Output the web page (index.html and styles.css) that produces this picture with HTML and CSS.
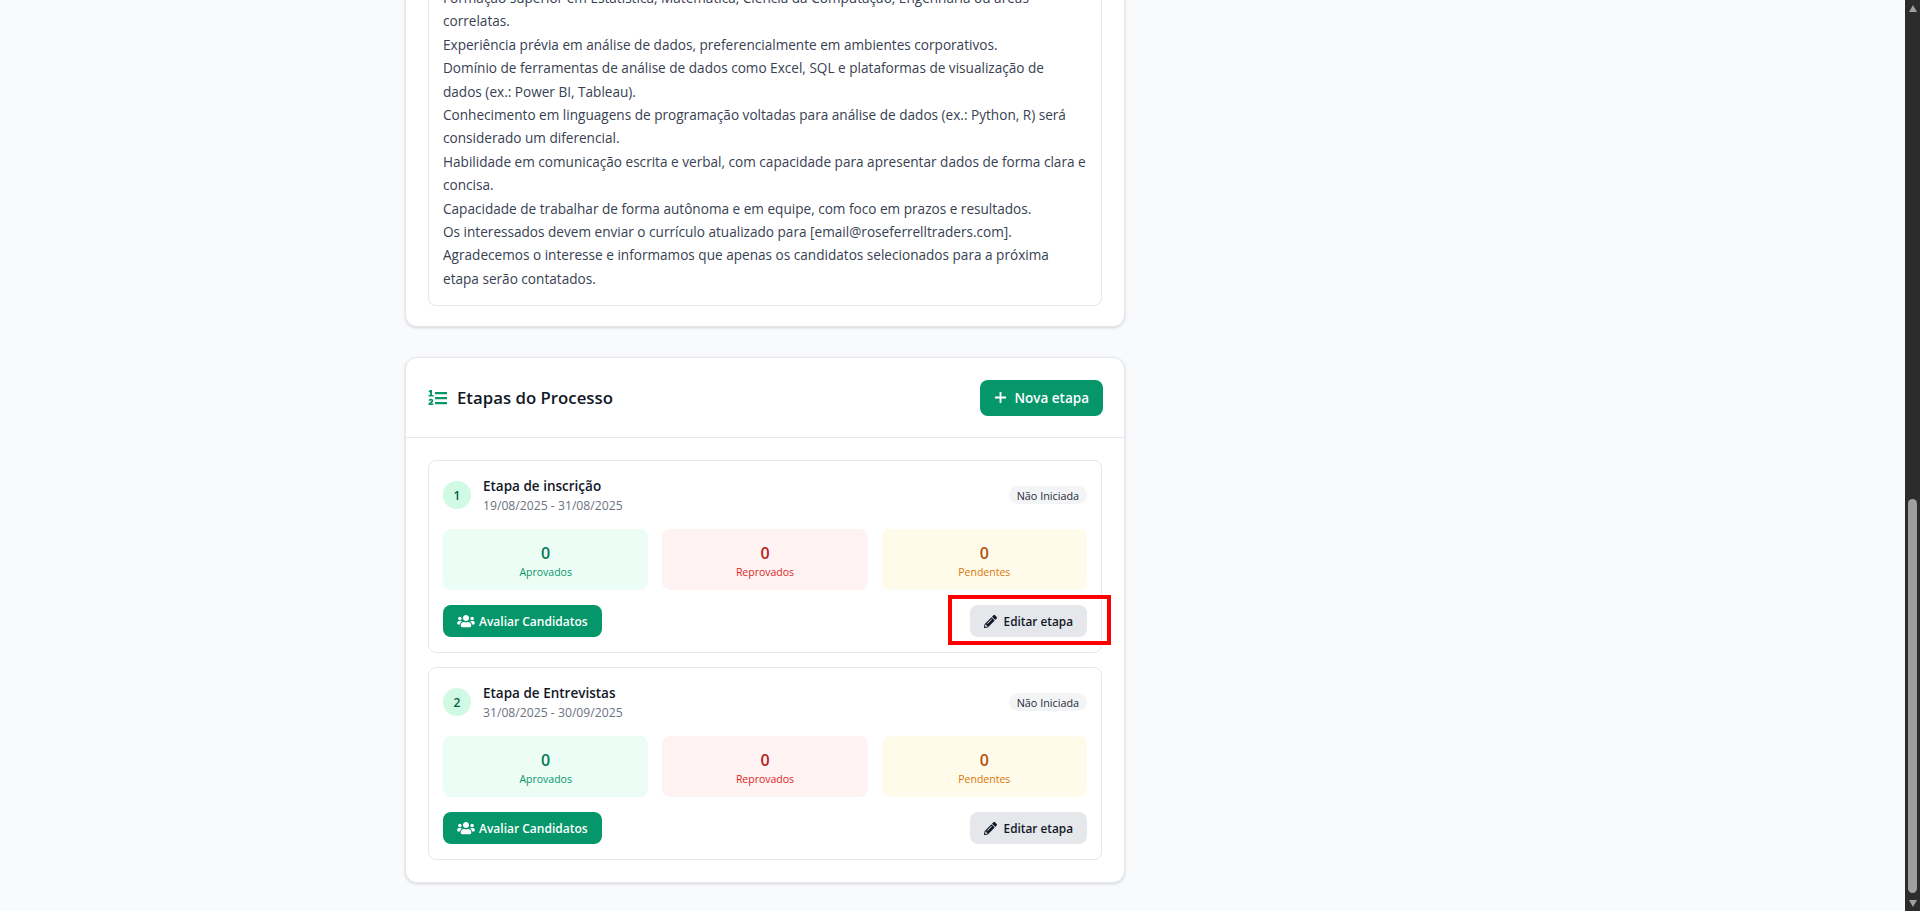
FILE: index.html
```html
<!DOCTYPE html>
<html lang="pt-BR">

<head>
  <meta charset="UTF-8">
  <meta name="viewport" content="width=device-width, initial-scale=1.0">
  <title>Etapas do Processo</title>
  <link rel="stylesheet" href="styles.css">
</head>

<body>
  <main class="page">
    <section class="card description-card">
      <div class="description">
        <p>Formação superior em Estatística, Matemática, Ciência da Computação, Engenharia ou áreas<br>correlatas.</p>
        <p>Experiência prévia em análise de dados, preferencialmente em ambientes corporativos.</p>
        <p>Domínio de ferramentas de análise de dados como Excel, SQL e plataformas de visualização de<br>dados (ex.: Power BI, Tableau).</p>
        <p>Conhecimento em linguagens de programação voltadas para análise de dados (ex.: Python, R) será<br>considerado um diferencial.</p>
        <p>Habilidade em comunicação escrita e verbal, com capacidade para apresentar dados de forma clara e<br>concisa.</p>
        <p>Capacidade de trabalhar de forma autônoma e em equipe, com foco em prazos e resultados.</p>
        <p>Os interessados devem enviar o currículo atualizado para [email@roseferrelltraders.com].</p>
        <p>Agradecemos o interesse e informamos que apenas os candidatos selecionados para a próxima<br>etapa serão contatados.</p>
      </div>
    </section>

    <section class="card steps-card">
      <header class="steps-header">
        <h2 class="steps-title">
          <svg class="icon-list" viewBox="0 0 19 16" fill="currentColor"><path d="M7 2h12v2.2H7zM7 7h12v2.2H7zM7 12h12v2.2H7z"/><path d="M2 0h2v5h1.6v1.5H.6V5h1.500V2L.7 2.600V1.200zM.5 10.500C.7 9.300 1.700 8.700 2.900 8.700c1.400 0 2.400.8 2.400 2 0 .9-.5 1.500-1.300 2.100l-.8.6h2.200V15H.5v-1.400l2.100-1.800c.5-.4.8-.7.800-1 0-.4-.2-.6-.6-.6s-.6.300-.7.800z"/></svg>
          Etapas do Processo
        </h2>
        <button class="btn btn-green btn-new">
          <svg class="icon-plus" viewBox="0 0 14 14"><path d="M7 1v12M1 7h12"/></svg>
          Nova etapa
        </button>
      </header>

      <div class="steps-list">
        <article class="step">
          <div class="step-top">
            <div class="step-name">
              <span class="step-number">1</span>
              <div class="step-text">
                <h3>Etapa de inscrição</h3>
                <p>19/08/2025 - 31/08/2025</p>
              </div>
            </div>
            <span class="badge">Não Iniciada</span>
          </div>
          <div class="stats">
            <div class="stat stat-ok"><strong>0</strong><span>Aprovados</span></div>
            <div class="stat stat-bad"><strong>0</strong><span>Reprovados</span></div>
            <div class="stat stat-wait"><strong>0</strong><span>Pendentes</span></div>
          </div>
          <div class="step-actions">
            <button class="btn btn-green">
              <svg class="icon-users" viewBox="0 0 640 512" fill="currentColor"><path d="M96 224c35.3 0 64-28.7 64-64s-28.7-64-64-64-64 28.7-64 64 28.7 64 64 64zm448 0c35.3 0 64-28.7 64-64s-28.7-64-64-64-64 28.7-64 64 28.7 64 64 64zm32 32h-64c-17.6 0-33.5 7.1-45.1 18.6 40.3 22.1 68.9 62 75.1 109.4h66c17.7 0 32-14.3 32-32v-32c0-35.3-28.7-64-64-64zm-256 0c61.9 0 112-50.1 112-112S381.9 32 320 32 208 82.1 208 144s50.1 112 112 112zm76.8 32h-8.3c-20.8 10-43.9 16-68.5 16s-47.6-6-68.5-16h-8.3C179.6 288 128 339.6 128 403.2V432c0 26.5 21.5 48 48 48h288c26.5 0 48-21.5 48-48v-28.8c0-63.6-51.6-115.2-115.2-115.2zm-223.7-13.4C161.5 263.1 145.6 256 128 256H64c-35.3 0-64 28.7-64 64v32c0 17.7 14.3 32 32 32h65.9c6.3-47.4 34.9-87.3 75.2-109.4z"/></svg>
              Avaliar Candidatos
            </button>
            <span class="highlight-box">
              <button class="btn btn-gray">
                <svg class="icon-pen" viewBox="0 0 512 512" fill="currentColor"><path d="M497.9 142.1l-46.1 46.1c-4.7 4.7-12.3 4.7-17 0l-111-111c-4.7-4.7-4.7-12.3 0-17l46.1-46.1c18.7-18.7 49.1-18.7 67.9 0l60.1 60.1c18.8 18.7 18.8 49.1 0 67.9zM284.2 99.8L21.6 362.4.4 483.9c-2.9 16.4 11.4 30.6 27.8 27.8l121.5-21.3 262.6-262.6c4.7-4.7 4.7-12.3 0-17l-111-111c-4.8-4.7-12.4-4.7-17.1 0zM124.1 339.9c-5.5-5.5-5.5-14.3 0-19.8l154-154c5.5-5.5 14.3-5.5 19.8 0s5.5 14.3 0 19.8l-154 154c-5.5 5.5-14.3 5.5-19.8 0zM88 424h48v36.3l-64.5 11.3-31.1-31.1L51.7 376H88v48z"/></svg>
                Editar etapa
              </button>
            </span>
          </div>
        </article>

        <article class="step">
          <div class="step-top">
            <div class="step-name">
              <span class="step-number">2</span>
              <div class="step-text">
                <h3>Etapa de Entrevistas</h3>
                <p>31/08/2025 - 30/09/2025</p>
              </div>
            </div>
            <span class="badge">Não Iniciada</span>
          </div>
          <div class="stats">
            <div class="stat stat-ok"><strong>0</strong><span>Aprovados</span></div>
            <div class="stat stat-bad"><strong>0</strong><span>Reprovados</span></div>
            <div class="stat stat-wait"><strong>0</strong><span>Pendentes</span></div>
          </div>
          <div class="step-actions">
            <button class="btn btn-green">
              <svg class="icon-users" viewBox="0 0 640 512" fill="currentColor"><path d="M96 224c35.3 0 64-28.7 64-64s-28.7-64-64-64-64 28.7-64 64 28.7 64 64 64zm448 0c35.3 0 64-28.7 64-64s-28.7-64-64-64-64 28.7-64 64 28.7 64 64 64zm32 32h-64c-17.6 0-33.5 7.1-45.1 18.6 40.3 22.1 68.9 62 75.1 109.4h66c17.7 0 32-14.3 32-32v-32c0-35.3-28.7-64-64-64zm-256 0c61.9 0 112-50.1 112-112S381.9 32 320 32 208 82.1 208 144s50.1 112 112 112zm76.8 32h-8.3c-20.8 10-43.9 16-68.5 16s-47.6-6-68.5-16h-8.3C179.6 288 128 339.6 128 403.2V432c0 26.5 21.5 48 48 48h288c26.5 0 48-21.5 48-48v-28.8c0-63.6-51.6-115.2-115.2-115.2zm-223.7-13.4C161.5 263.1 145.6 256 128 256H64c-35.3 0-64 28.7-64 64v32c0 17.7 14.3 32 32 32h65.9c6.3-47.4 34.9-87.3 75.2-109.4z"/></svg>
              Avaliar Candidatos
            </button>
            <button class="btn btn-gray">
              <svg class="icon-pen" viewBox="0 0 512 512" fill="currentColor"><path d="M497.9 142.1l-46.1 46.1c-4.7 4.7-12.3 4.7-17 0l-111-111c-4.7-4.7-4.7-12.3 0-17l46.1-46.1c18.7-18.7 49.1-18.7 67.9 0l60.1 60.1c18.8 18.7 18.8 49.1 0 67.9zM284.2 99.8L21.6 362.4.4 483.9c-2.9 16.4 11.4 30.6 27.8 27.8l121.5-21.3 262.6-262.6c4.7-4.7 4.7-12.3 0-17l-111-111c-4.8-4.7-12.4-4.7-17.1 0zM124.1 339.9c-5.5-5.5-5.5-14.3 0-19.8l154-154c5.5-5.5 14.3-5.5 19.8 0s5.5 14.3 0 19.8l-154 154c-5.5 5.5-14.3 5.5-19.8 0zM88 424h48v36.3l-64.5 11.3-31.1-31.1L51.7 376H88v48z"/></svg>
              Editar etapa
            </button>
          </div>
        </article>
      </div>
    </section>
  </main>

  <div class="scrollbar">
    <span class="arrow arrow-up"></span>
    <span class="thumb"></span>
    <span class="arrow arrow-down"></span>
  </div>
</body>

</html>
```

FILE: styles.css
```css
* {
  box-sizing: border-box;
}

html,
body {
  height: 911px;
  overflow: hidden;
}

body {
  margin: 0;
  display: flex;
  background-color: #f9fafb;
  color: #111827;
  font-family: "Open Sans", "Noto Sans", sans-serif;
}

.page {
  flex: 1;
  display: flex;
  flex-direction: column;
  align-items: flex-start;
  padding-left: 405px;
  gap: 30px;
}

.card {
  flex-shrink: 0;
  width: 720px;
  background-color: #ffffff;
  border: 1px solid #e5e7eb;
  border-radius: 12px;
  box-shadow: 0 1px 3px rgba(0, 0, 0, 0.15);
}

/* the page is scrolled, the top of this card is out of view */
.description-card {
  margin-top: -20px;
  padding: 0 22px 20px;
  border-top: none;
}

.description {
  border: 1px solid #e5e7eb;
  border-top: none;
  border-radius: 0 0 8px 8px;
  padding: 6px 14px 15px;
  font-size: 13.6px;
  line-height: 23.4px;
  color: #374151;
}

.description p {
  margin: 0;
}

.steps-header {
  display: flex;
  justify-content: space-between;
  align-items: center;
  height: 80px;
  padding: 0 21px 0 22px;
  border-bottom: 1px solid #e5e7eb;
}

.steps-title {
  display: flex;
  align-items: center;
  gap: 10px;
  margin: 0;
  font-size: 16.8px;
  font-weight: 600;
}

.icon-list {
  width: 19px;
  height: 16px;
  color: #059669;
}

.btn {
  display: inline-flex;
  align-items: center;
  gap: 4px;
  height: 32px;
  padding: 0 14px;
  border: none;
  border-radius: 8px;
  font-family: inherit;
  font-size: 12px;
  font-weight: 600;
}

.btn-green {
  background-color: #059669;
  color: #ffffff;
}

.btn-gray {
  gap: 7px;
  background-color: #e5e7eb;
  color: #111827;
  font-size: 11.8px;
}

.btn-new {
  gap: 7px;
  height: 36px;
  padding: 0 14px;
  font-size: 13.5px;
}

.icon-plus {
  width: 13px;
  height: 13px;
  fill: none;
  stroke: currentColor;
  stroke-width: 2;
}

.icon-users {
  width: 18px;
  height: 14px;
}

.icon-pen {
  width: 13px;
  height: 13px;
}

.steps-list {
  display: flex;
  flex-direction: column;
  gap: 14px;
  padding: 22px;
}

.step {
  height: 193px;
  padding: 14px;
  border: 1px solid #e5e7eb;
  border-radius: 8px;
}

.step-top {
  display: flex;
  justify-content: space-between;
  align-items: center;
  height: 54px;
  padding-bottom: 14px;
}

.step-name {
  display: flex;
  align-items: center;
  gap: 12px;
}

.step-text {
  padding-top: 2px;
}

.step-number {
  display: flex;
  justify-content: center;
  align-items: center;
  width: 28px;
  height: 28px;
  border-radius: 50%;
  background-color: #d1fae5;
  color: #065f46;
  font-size: 12px;
  font-weight: 600;
}

.step-name h3 {
  margin: 0;
  font-size: 13.5px;
  font-weight: 600;
  line-height: 20px;
}

.step-name p {
  margin: 0;
  font-size: 12.2px;
  line-height: 20px;
  color: #6b7280;
}

.badge {
  display: flex;
  align-items: center;
  height: 18px;
  padding: 0 8px;
  border-radius: 9px;
  background-color: #f3f4f6;
  color: #1f2937;
  font-size: 10.8px;
  font-weight: 500;
}

.stats {
  display: grid;
  grid-template-columns: repeat(3, 1fr);
  gap: 14px;
}

.stat {
  display: flex;
  flex-direction: column;
  align-items: center;
  justify-content: center;
  height: 61px;
  padding-top: 2px;
  border-radius: 8px;
}

.stat strong {
  font-size: 16px;
  font-weight: 600;
  line-height: 22px;
}

.stat span {
  font-size: 10.5px;
  line-height: 16px;
}

.stat-ok {
  background-color: #ecfdf5;
  color: #059669;
}

.stat-ok strong {
  color: #047857;
}

.stat-bad {
  background-color: #fef2f2;
  color: #dc2626;
}

.stat-bad strong {
  color: #b91c1c;
}

.stat-wait {
  background-color: #fffbeb;
  color: #d97706;
}

.stat-wait strong {
  color: #b45309;
}

.step-actions {
  display: flex;
  justify-content: space-between;
  align-items: center;
  margin-top: 15px;
}

.highlight-box {
  position: relative;
  display: inline-flex;
}

.highlight-box::after {
  content: "";
  position: absolute;
  inset: -10px -24px -8px -22px;
  border: 4px solid #ff0000;
}

.scrollbar {
  display: flex;
  flex-direction: column;
  align-items: center;
  width: 15px;
  height: 911px;
  padding-top: 5px;
  background-color: #2c2c2c;
}

.thumb {
  width: 9px;
  height: 394px;
  margin-top: 487px;
  border-radius: 5px;
  background-color: #9f9f9f;
}

.arrow {
  width: 0;
  height: 0;
  border-left: 4.5px solid transparent;
  border-right: 4.5px solid transparent;
}

.arrow-up {
  border-bottom: 7px solid #9f9f9f;
}

.arrow-down {
  margin-top: 7px;
  border-top: 7px solid #9f9f9f;
}
```
